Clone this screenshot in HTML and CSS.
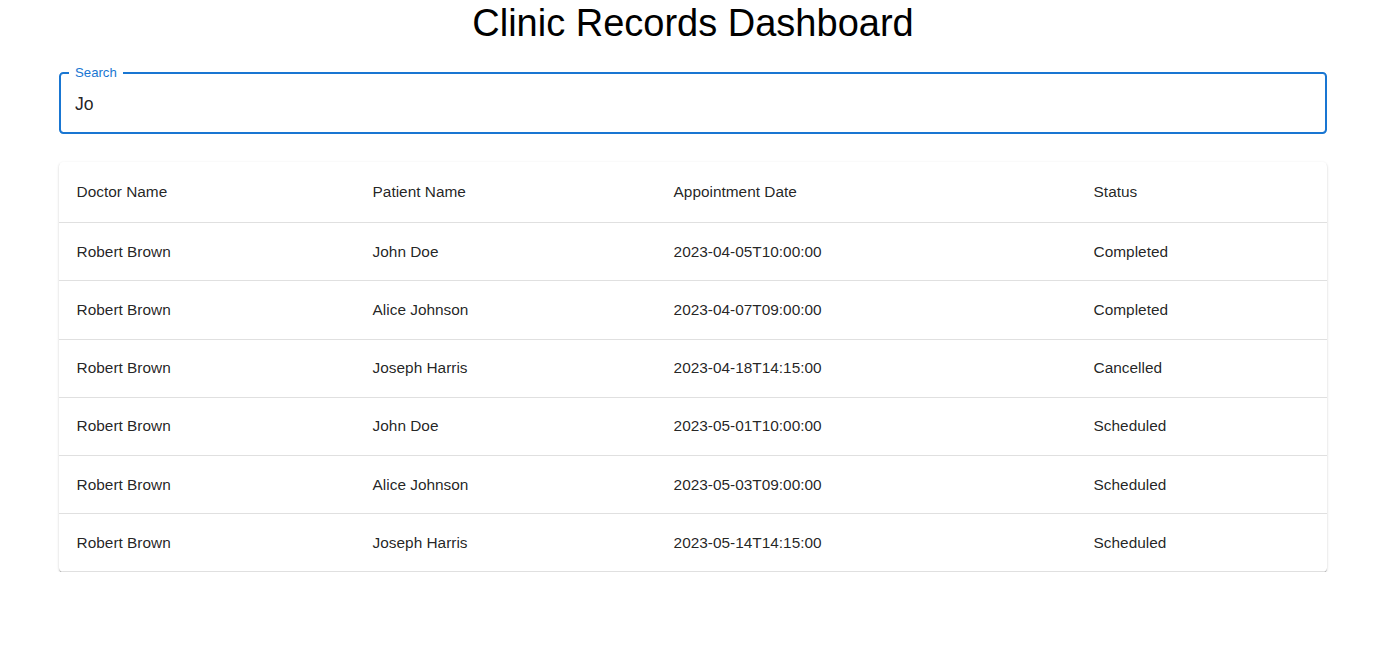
FILE: index.html
```html
<!DOCTYPE html>
<html lang="en">
<head>
<meta charset="utf-8">
<title>Clinic Records Dashboard</title>
<link rel="stylesheet" href="styles.css">
</head>
<body>
<div class="container">
  <h1 class="title">Clinic Records Dashboard</h1>
  <div class="field">
    <span class="field-label">Search</span>
    <input class="field-input" type="text" value="Jo" aria-label="Search">
  </div>
  <div class="paper">
    <table class="records">
      <colgroup>
        <col class="c1"><col class="c2"><col class="c3"><col class="c4">
      </colgroup>
      <thead>
        <tr><th>Doctor Name</th><th>Patient Name</th><th>Appointment Date</th><th>Status</th></tr>
      </thead>
      <tbody>
        <tr><td>Robert Brown</td><td>John Doe</td><td>2023-04-05T10:00:00</td><td>Completed</td></tr>
        <tr><td>Robert Brown</td><td>Alice Johnson</td><td>2023-04-07T09:00:00</td><td>Completed</td></tr>
        <tr><td>Robert Brown</td><td>Joseph Harris</td><td>2023-04-18T14:15:00</td><td>Cancelled</td></tr>
        <tr><td>Robert Brown</td><td>John Doe</td><td>2023-05-01T10:00:00</td><td>Scheduled</td></tr>
        <tr><td>Robert Brown</td><td>Alice Johnson</td><td>2023-05-03T09:00:00</td><td>Scheduled</td></tr>
        <tr><td>Robert Brown</td><td>Joseph Harris</td><td>2023-05-14T14:15:00</td><td>Scheduled</td></tr>
      </tbody>
    </table>
  </div>
</div>
</body>
</html>
```
FILE: styles.css
```css
html, body {
  margin: 0;
  padding: 0;
  background: #ffffff;
}
body {
  font-family: "Liberation Sans", Arial, Helvetica, sans-serif;
  color: rgba(0, 0, 0, 0.87);
}
.container {
  width: 1268px;
  margin-left: 59px;
}
.title {
  margin: 0 0 26.4px 0;
  font-size: 38px;
  font-weight: 400;
  line-height: 46px;
  text-align: center;
  color: #000;
}
.field {
  position: relative;
  margin-bottom: 27.6px;
  height: 61.6px;
  box-sizing: border-box;
  border: 2px solid #1976d2;
  border-radius: 4.4px;
  display: flex;
  align-items: center;
}
.field-label {
  position: absolute;
  top: -9px;
  left: 8px;
  padding: 0 6px;
  background: #fff;
  color: #1976d2;
  font-size: 13.2px;
  line-height: 16px;
}
.field-input {
  border: none;
  outline: none;
  background: transparent;
  width: 100%;
  padding: 2px 0 0 14px;
  margin: 0;
  font-family: inherit;
  font-size: 17.6px;
  color: rgba(0, 0, 0, 0.87);
}
.paper {
  background: #fff;
  border-radius: 4.4px;
  box-shadow: 0 2px 1px -1px rgba(0,0,0,0.25), 0 1px 1px 0 rgba(0,0,0,0.16), 0 1px 3px 0 rgba(0,0,0,0.14);
  overflow: hidden;
}
.records {
  width: 100%;
  border-collapse: collapse;
  table-layout: fixed;
}
.c1 { width: 296px; }
.c2 { width: 301px; }
.c3 { width: 420px; }
.records th,
.records td {
  text-align: left;
  font-weight: 400;
  font-size: 15.4px;
  padding: 17.6px;
  border-bottom: 1px solid #e0e0e0;
  color: rgba(0, 0, 0, 0.87);
}
.records th {
  line-height: 25.4px;
}
.records td {
  line-height: 22px;
}
```
